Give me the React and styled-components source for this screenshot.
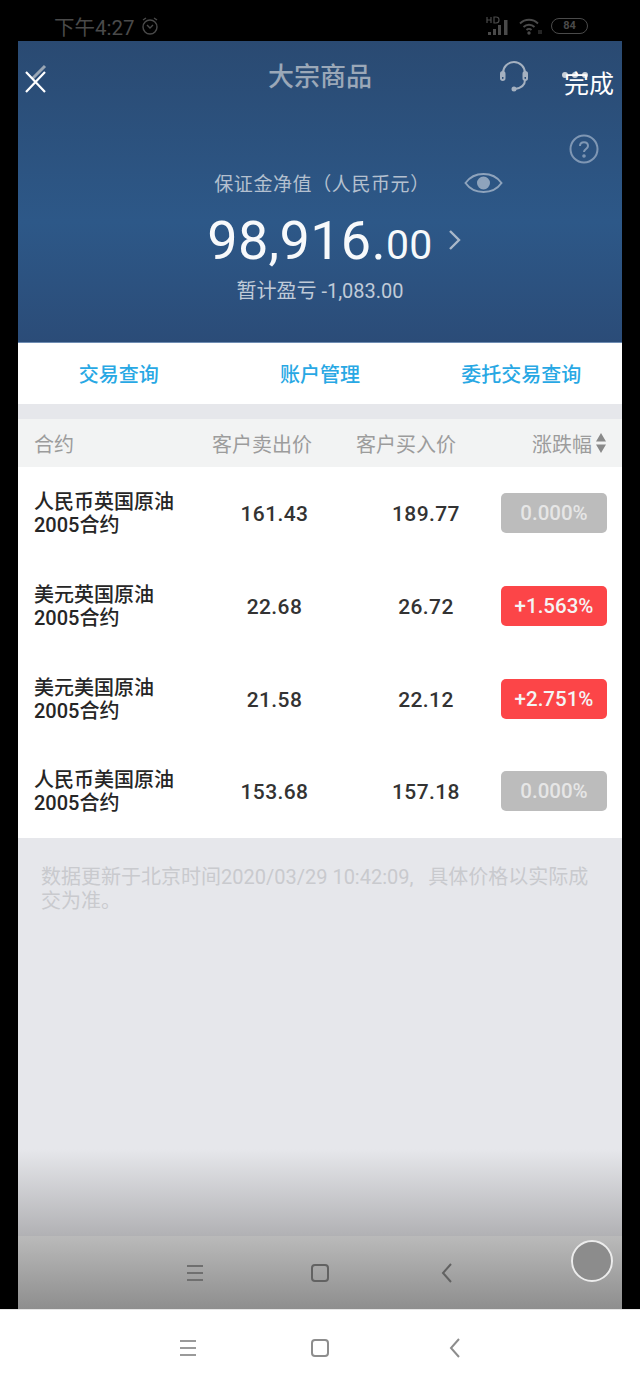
import React from 'react';
import styled, { createGlobalStyle } from 'styled-components';

const GlobalStyle = createGlobalStyle`
  html, body {
    margin: 0;
    padding: 0;
    background: #000;
  }
  * {
    box-sizing: border-box;
  }
  body {
    font-family: Roboto, "Noto Sans CJK SC", sans-serif;
  }
`;

const Page = styled.div`
  width: 640px;
  height: 1386px;
  display: flex;
  flex-direction: column;
  background: #000;
`;

const StatusBar = styled.div`
  height: 41px;
  padding: 14px 52px 0 54px;
  display: flex;
  justify-content: space-between;
  align-items: flex-start;
  color: #4a4a4a;
`;

const StatusGroup = styled.div`
  display: flex;
  align-items: center;
  gap: ${(p) => p.$gap || 6}px;
  height: 24px;
  font-size: 20.5px;
`;

const Battery = styled.div`
  width: 37px;
  height: 16px;
  border: 1.5px solid #4a4a4a;
  border-radius: 8px;
  font-size: 11px;
  font-weight: 700;
  line-height: 13px;
  text-align: center;
`;

const Screen = styled.div`
  flex: 1;
  margin: 0 18px;
  display: flex;
  flex-direction: column;
  background: #e6e7eb;
`;

const Hero = styled.div`
  position: relative;
  height: 302px;
  background: linear-gradient(180deg, #2a4a72 0%, #2d5888 60%, #2b4c78 100%);
  border-bottom: 1px solid #6f8db3;
`;

const TopBar = styled.div`
  height: 74px;
  padding-bottom: 7px;
  display: flex;
  align-items: center;
  justify-content: center;
`;

const Title = styled.div`
  font-size: 26px;
  font-weight: 500;
  color: #9ba8b8;
`;

const Overlay = styled.div`
  position: absolute;
  left: ${(p) => p.$x}px;
  top: ${(p) => p.$y}px;
  line-height: 0;
`;

const DoneText = styled.div`
  font-size: 25px;
  line-height: 28px;
  color: #fff;
`;

const Balance = styled.div`
  display: flex;
  flex-direction: column;
  align-items: center;
  padding-top: 56px;
`;

const BalanceLabel = styled.div`
  height: 28px;
  padding-left: 4px;
  font-size: 19px;
  line-height: 28px;
  color: #b4c0cf;
  letter-spacing: 0.6px;
`;

const Amount = styled.div`
  height: 67px;
  margin-top: 12px;
  font-size: 54px;
  line-height: 60px;
  color: #f7f9fb;
  letter-spacing: 0.3px;
`;

const Cents = styled.span`
  font-size: 41px;
`;

const ProfitLine = styled.div`
  font-size: 20px;
  line-height: 26px;
  color: #c0cbd8;
`;

const Links = styled.div`
  height: 61px;
  background: #fff;
  display: grid;
  grid-template-columns: repeat(3, 1fr);
  align-items: center;
  justify-items: center;
`;

const LinkItem = styled.div`
  font-size: 20px;
  font-weight: 500;
  color: #28a8e4;
`;

const TableHead = styled.div`
  height: 48px;
  margin-top: 15px;
  padding: 0 16px 0 16px;
  background: #f2f3f3;
  display: grid;
  grid-template-columns: 178px 144px 142px 1fr;
  align-items: center;
  font-size: 20px;
  color: #9c9c9c;
`;

const HeadRight = styled.div`
  display: flex;
  justify-content: flex-end;
  align-items: center;
  gap: 4px;
`;

const Rows = styled.div`
  background: #fff;
`;

const Row = styled.div`
  height: ${(p) => p.$h || 93}px;
  padding: 0 15px 0 16px;
  display: grid;
  grid-template-columns: 178px 125px 164px 106px;
  align-items: center;
`;

const Name = styled.div`
  font-size: 20px;
  line-height: 23px;
  font-weight: 500;
  color: #262626;
`;

const Price = styled.div`
  padding-left: ${(p) => p.$indent || 0}px;
  font-size: 21px;
  font-weight: 500;
  color: #333;
  text-align: center;
  letter-spacing: 0.4px;
`;

const Change = styled.div`
  height: 40px;
  margin-top: -2px;
  border-radius: 5px;
  background: ${(p) => (p.$up ? '#fc4548' : '#bcbcbc')};
  color: ${(p) => (p.$up ? '#f4f4f4' : '#e6e6e6')};
  font-size: 20.5px;
  font-weight: 500;
  line-height: 41px;
  text-align: center;
`;

const Note = styled.div`
  padding: 27px 30px 0 23px;
  font-size: 20px;
  line-height: 24px;
  color: #c9cace;
`;

const Fade = styled.div`
  flex: 1;
  display: flex;
  flex-direction: column;
  justify-content: flex-end;
`;

const Shade = styled.div`
  height: 87px;
  background: linear-gradient(180deg, #e6e7eb 0%, #b1b1b4 100%);
`;

const InnerNav = styled.div`
  position: relative;
  height: 73px;
  background: linear-gradient(180deg, #bababa 0%, #8e8e8e 100%);
  display: flex;
  align-items: center;
  padding: 0 0 0 167px;
`;

const FloatBall = styled.div`
  position: absolute;
  right: 9px;
  top: 4px;
  width: 42px;
  height: 42px;
  border-radius: 50%;
  border: 2px solid #ececec;
  background: #8c8c8c;
`;

const OuterNav = styled.div`
  height: 77px;
  background: #fff;
  border-top: 1px solid #e6e6e6;
  display: flex;
  align-items: center;
`;

const NavSlot = styled.div`
  width: ${(p) => p.$w}px;
  margin-left: ${(p) => p.$ml || 0}px;
  display: flex;
  justify-content: center;
  line-height: 0;
`;

const MenuIcon = ({ color, width = 2 }) => (
  <svg width="20" height="20" viewBox="0 0 20 20" fill="none" stroke={color} strokeWidth={width}>
    <path d="M2 3h16M2 10h16M2 17h16" />
  </svg>
);

const HomeIcon = ({ color, width = 2 }) => (
  <svg width="20" height="20" viewBox="0 0 20 20" fill="none" stroke={color} strokeWidth={width}>
    <rect x="2" y="2" width="16" height="16" rx="3" />
  </svg>
);

const BackIcon = ({ color, width = 2 }) => (
  <svg width="14" height="22" viewBox="0 0 14 22" fill="none" stroke={color} strokeWidth={width}>
    <path d="M11 2 3 11l8 9" />
  </svg>
);

const rows = [
  { name: '人民币英国原油', sell: '161.43', buy: '189.77', change: '0.000%' },
  { name: '美元英国原油', sell: '22.68', buy: '26.72', change: '+1.563%', up: true },
  { name: '美元美国原油', sell: '21.58', buy: '22.12', change: '+2.751%', up: true },
  { name: '人民币美国原油', sell: '153.68', buy: '157.18', change: '0.000%' },
];

const App = () => (
  <Page>
    <GlobalStyle />
    <StatusBar>
      <StatusGroup>
        <span>下午4:27</span>
        <svg width="18" height="20" viewBox="0 0 18 20" fill="none" stroke="#4a4a4a" strokeWidth="1.4">
          <circle cx="9" cy="11" r="7" />
          <path d="M6 9l3 3 3-3M2 4l3-2M16 4l-3-2" />
        </svg>
      </StatusGroup>
      <StatusGroup $gap={9}>
        <svg width="24" height="20" viewBox="0 0 24 20" fill="#4a4a4a">
          <path d="M1 1v6M5 1v6M1 4h4M8 1v6h2c2 0 3-1 3-3s-1-3-3-3z" fill="none" stroke="#4a4a4a" strokeWidth="1.200" />
          <rect x="2" y="16" width="3" height="3" />
          <rect x="7" y="13" width="3" height="6" />
          <rect x="12" y="9" width="3" height="10" />
          <rect x="18" y="4" width="3.500" height="15" />
        </svg>
        <svg width="23" height="18" viewBox="0 0 23 18" fill="none" stroke="#4a4a4a" strokeWidth="1.800">
          <path d="M1 6.500c5-5 13-5 18 0M4.500 10c3-3 8-3 11 0M7.500 13c1.500-1.500 3.500-1.500 5 0" />
          <circle cx="10" cy="16" r="0.800" />
          <path d="M20 13v4M22 13v4" strokeWidth="1" />
        </svg>
        <Battery>84</Battery>
      </StatusGroup>
    </StatusBar>
    <Screen>
      <Hero>
        <TopBar>
          <Title>大宗商品</Title>
        </TopBar>
        <Overlay $x={7} $y={22}>
          <svg width="26" height="32" viewBox="0 0 26 32" fill="none">
            <path d="M20 3 7 16" stroke="#9aa6b4" strokeWidth="3" />
            <path d="M1 9l19 20M20 9 1 29" stroke="#fff" strokeWidth="2.200" />
          </svg>
        </Overlay>
        <Overlay $x={480} $y={19}>
          <svg width="32" height="34" viewBox="0 0 32 34" fill="none" stroke="#a5b1c0" strokeWidth="2">
            <path d="M5 17V13a11 11 0 0 1 22 0v4" />
            <rect x="3" y="12" width="3.500" height="8" rx="1.700" />
            <rect x="25.500" y="12" width="3.500" height="8" rx="1.700" />
            <path d="M27 20c0 6-4 8-10 9" />
            <circle cx="16" cy="29" r="1.500" fill="#a5b1c0" />
          </svg>
        </Overlay>
        <Overlay $x={543} $y={30}>
          <svg width="32" height="8" viewBox="0 0 32 8" fill="#c9d0d8">
            <circle cx="4" cy="4" r="3" />
            <circle cx="14" cy="4" r="3" />
            <circle cx="24" cy="4" r="3" />
          </svg>
        </Overlay>
        <Overlay $x={546} $y={30}>
          <DoneText>完成</DoneText>
        </Overlay>
        <Overlay $x={551} $y={93}>
          <svg width="30" height="30" viewBox="0 0 30 30" fill="none" stroke="#7f97b4" strokeWidth="2">
            <circle cx="15" cy="15" r="13.500" />
            <path d="M11 12c0-5 8-5 8 0 0 3-4 3-4 6" />
            <circle cx="15" cy="22" r="0.800" />
          </svg>
        </Overlay>
        <Overlay $x={446} $y={129}>
          <svg width="39" height="26" viewBox="0 0 39 26" fill="none" stroke="#8ea3bc" strokeWidth="2">
            <path d="M1.500 13C10 1 29 1 37.500 13 29 25 10 25 1.500 13Z" />
            <circle cx="19.500" cy="13" r="5.500" fill="#8ea3bc" />
          </svg>
        </Overlay>
        <Overlay $x={430} $y={188}>
          <svg width="14" height="22" viewBox="0 0 14 22" fill="none" stroke="#a9b8ca" strokeWidth="2.400">
            <path d="M2 2l9 9-9 9" />
          </svg>
        </Overlay>
        <Balance>
          <BalanceLabel>保证金净值（人民币元）</BalanceLabel>
          <Amount>
            98,916.<Cents>00</Cents>
          </Amount>
          <ProfitLine>暂计盈亏 -1,083.00</ProfitLine>
        </Balance>
      </Hero>
      <Links>
        <LinkItem>交易查询</LinkItem>
        <LinkItem>账户管理</LinkItem>
        <LinkItem>委托交易查询</LinkItem>
      </Links>
      <TableHead>
        <div>合约</div>
        <div>客户卖出价</div>
        <div>客户买入价</div>
        <HeadRight>
          涨跌幅
          <svg width="10" height="20" viewBox="0 0 10 20" fill="#8a8a8a">
            <path d="M5 0l5 8.500H0zM5 20 0 11.500h10z" />
          </svg>
        </HeadRight>
      </TableHead>
      <Rows>
        {rows.map((row, i) => (
          <Row key={row.name} $h={i === 3 ? 92 : 93}>
            <Name>
              {row.name}
              <br />
              2005合约
            </Name>
            <Price>{row.sell}</Price>
            <Price $indent={14}>{row.buy}</Price>
            <Change $up={row.up}>{row.change}</Change>
          </Row>
        ))}
      </Rows>
      <Note>数据更新于北京时间2020/03/29 10:42:09,{'\u00a0\u00a0\u00a0'}具体价格以实际成交为准。</Note>
      <Fade>
        <Shade />
      </Fade>
      <InnerNav>
        <NavSlot $w={20}>
          <MenuIcon color="#6f6f6f" />
        </NavSlot>
        <NavSlot $w={20} $ml={105}>
          <HomeIcon color="#626262" />
        </NavSlot>
        <NavSlot $w={14} $ml={110}>
          <BackIcon color="#626262" />
        </NavSlot>
        <FloatBall />
      </InnerNav>
    </Screen>
    <OuterNav>
      <NavSlot $w={20} $ml={178}>
        <MenuIcon color="#9a9a9a" />
      </NavSlot>
      <NavSlot $w={20} $ml={112}>
        <HomeIcon color="#8d8d8d" />
      </NavSlot>
      <NavSlot $w={14} $ml={118}>
        <BackIcon color="#8d8d8d" />
      </NavSlot>
    </OuterNav>
  </Page>
);

export default App;
